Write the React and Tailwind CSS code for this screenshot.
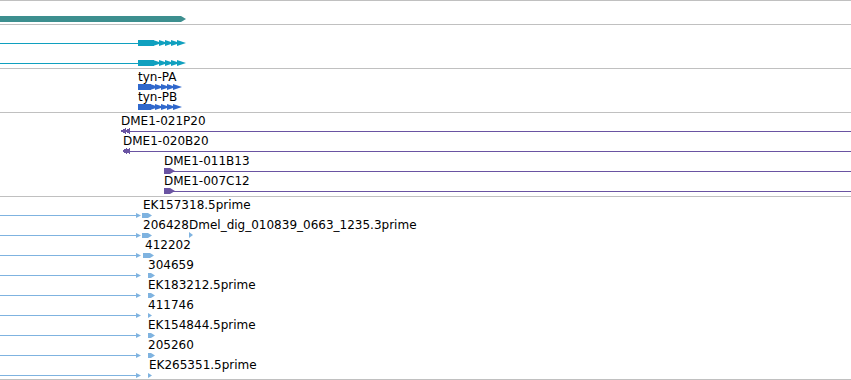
import React from 'react';

const W = 851;

// colours per track
const TEAL = '#3d8f8f';
const CYAN = '#10a0bf';
const BLUE = '#3068cc';
const PURPLE = '#6a54a2';
const SKY = '#7fb3e0';

// one 20px feature row; glyph drawn in row coordinates, centre line at y=18
const Row = ({ labels = [], children }) => (
  <div className="relative h-[20px] shrink-0">
    <svg className="absolute left-0 top-0 overflow-visible" width={W} height={22} shapeRendering="crispEdges">
      {children}
    </svg>
    {labels.map(([text, x]) => (
      <span key={text} className="absolute top-[1px] whitespace-nowrap" style={{ left: x }}>
        {text}
      </span>
    ))}
  </div>
);

// thick block followed by a run of arrow heads (plus strand)
const Arrows = ({ from, bases, color, w = 9 }) => (
  <>
    <rect x={from} y={15} width={bases[0] - from + 1} height={6} fill={color} />
    {bases.map((b) => (
      <polygon key={b} points={`${b},15 ${b + w},18 ${b},21`} fill={color} shapeRendering="auto" />
    ))}
  </>
);

const Line = ({ x = 0, to, color }) => <rect x={x} y={18} width={to - x} height={1} fill={color} />;

const estRows = [
  { label: 'EK157318.5prime', lx: 143, fx: 142, fw: 10 },
  { label: '206428', lx: 143, fx: 142, fw: 10, extra: 'Dmel_dig_010839_0663_1235.3prime' },
  { label: '412202', lx: 145, fx: 143, fw: 11 },
  { label: '304659', lx: 148, fx: 148, fw: 7 },
  { label: 'EK183212.5prime', lx: 148, fx: 148, fw: 7 },
  { label: '411746', lx: 148, fx: 148, fw: 4 },
  { label: 'EK154844.5prime', lx: 148, fx: 148, fw: 7 },
  { label: '205260', lx: 148, fx: 148, fw: 7 },
  { label: 'EK265351.5prime', lx: 149, fx: 148, fw: 4 },
];

const App = () => {
  return (
    <div className="w-[851px] h-[380px] overflow-hidden bg-white border-t border-[#c0c0c0] font-['DejaVu_Sans',sans-serif] text-[12px] leading-[14px] text-black">
      {/* consensus bar */}
      <div className="flex flex-col h-[24px] border-b border-[#c0c0c0]">
        <Row>
          <polygon points="0,15 181,15 186,18 181,21 0,21" fill={TEAL} shapeRendering="auto" />
        </Row>
      </div>

      {/* gene models */}
      <div className="flex flex-col h-[44px] border-b border-[#c0c0c0]">
        {[0, 1].map((i) => (
          <Row key={i}>
            <Line to={138} color={CYAN} />
            <Arrows from={138} bases={[153, 159, 165, 171, 177]} color={CYAN} />
          </Row>
        ))}
      </div>

      {/* transcripts */}
      <div className="flex flex-col h-[44px] border-b border-[#c0c0c0]">
        {['tyn-PA', 'tyn-PB'].map((t) => (
          <Row key={t} labels={[[t, 138]]}>
            <Arrows from={138} bases={[150, 155, 161, 167, 173]} color={BLUE} />
          </Row>
        ))}
      </div>

      {/* BAC ends */}
      <div className="flex flex-col h-[84px] border-b border-[#c0c0c0]">
        <Row labels={[['DME1-021P20', 121]]}>
          <Line x={128} to={W} color={PURPLE} />
          <polygon points="120,18 126,15 126,21" fill={PURPLE} />
          <polygon points="124,18 130,15 130,21" fill={PURPLE} />
        </Row>
        <Row labels={[['DME1-020B20', 123]]}>
          <Line x={128} to={W} color={PURPLE} />
          <polygon points="122,18 127,15 127,21" fill={PURPLE} />
          <polygon points="125,18 130,15 130,21" fill={PURPLE} />
        </Row>
        {['DME1-011B13', 'DME1-007C12'].map((t) => (
          <Row key={t} labels={[[t, 164]]}>
            <Line x={164} to={W} color={PURPLE} />
            <polygon points="164,15 170,15 175,18 170,21 164,21" fill={PURPLE} shapeRendering="auto" />
          </Row>
        ))}
      </div>

      {/* ESTs */}
      <div className="flex flex-col h-[183px] border-b border-[#c0c0c0]">
        {estRows.map((r) => (
          <Row key={r.label} labels={r.extra ? [[r.label, r.lx], [r.extra, 189]] : [[r.label, r.lx]]}>
            <Line to={137} color={SKY} />
            <polygon points="136,16 141,18.5 136,21" fill={SKY} shapeRendering="auto" />
            <polygon
              points={`${r.fx},16 ${r.fx + r.fw - 4},16 ${r.fx + r.fw},18.5 ${r.fx + r.fw - 4},21 ${r.fx},21`}
              fill={SKY}
              shapeRendering="auto"
            />
            {r.extra && <polygon points="189,15 193,18 189,21" fill={SKY} shapeRendering="auto" />}
          </Row>
        ))}
      </div>
    </div>
  );
};

export default App;
